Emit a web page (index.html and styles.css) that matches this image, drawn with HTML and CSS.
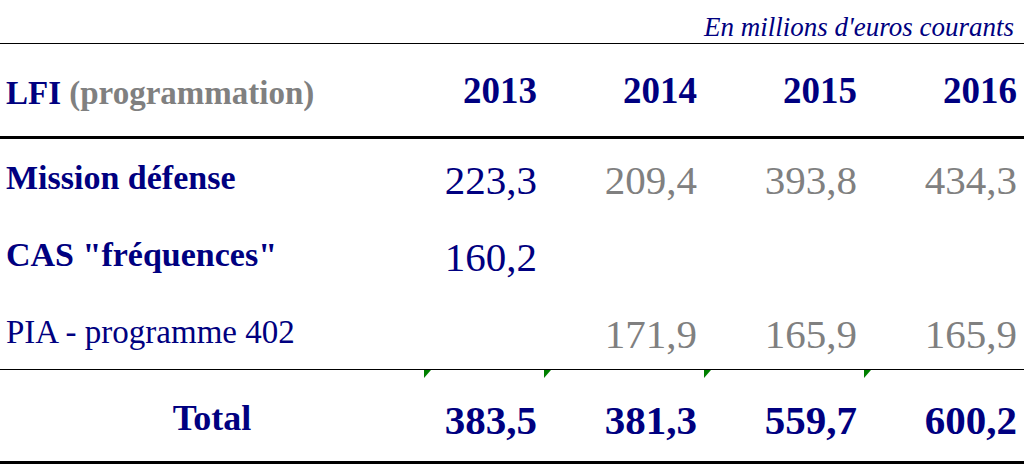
FILE: index.html
```html
<!DOCTYPE html>
<html>
<head>
    <meta charset="utf-8">
    <title>LFI programmation</title>
    <link rel="stylesheet" href="styles.css">
</head>
<body>
<div class="sheet">
    <div class="caption">En millions d'euros courants</div>

    <div class="row head">
        <div class="cell label"><span class="navy">LFI</span>&nbsp;<span class="grey">(programmation)</span></div>
        <div class="cell num">2013</div>
        <div class="cell num">2014</div>
        <div class="cell num">2015</div>
        <div class="cell num">2016</div>
    </div>

    <div class="row line1">
        <div class="cell label strong">Mission défense</div>
        <div class="cell num">223,3</div>
        <div class="cell num grey">209,4</div>
        <div class="cell num grey">393,8</div>
        <div class="cell num grey">434,3</div>
    </div>

    <div class="row line2">
        <div class="cell label strong">CAS "fréquences"</div>
        <div class="cell num">160,2</div>
        <div class="cell num"></div>
        <div class="cell num"></div>
        <div class="cell num"></div>
    </div>

    <div class="row line3">
        <div class="cell label">PIA - programme 402</div>
        <div class="cell num"></div>
        <div class="cell num grey">171,9</div>
        <div class="cell num grey">165,9</div>
        <div class="cell num grey">165,9</div>
    </div>

    <div class="row total">
        <div class="cell label">Total</div>
        <div class="cell num flag">383,5</div>
        <div class="cell num flag">381,3</div>
        <div class="cell num flag">559,7</div>
        <div class="cell num flag">600,2</div>
    </div>
</div>
</body>
</html>
```

FILE: styles.css
```css
body {
    margin: 0;
    background-color: #ffffff;
    font-family: "Liberation Serif", "Times New Roman", serif;
    color: #000080;
}

.sheet {
    width: 1024px;
}

/* ligne d'unité en haut à droite */
.caption {
    height: 44px;
    box-sizing: border-box;
    padding: 0 10px 2px 0;
    border-bottom: 1px solid #000000;
    display: flex;
    justify-content: flex-end;
    align-items: flex-end;
    font-size: 27px;
    font-style: italic;
    line-height: 1;
}

.row {
    display: grid;
    grid-template-columns: 424px 120px 160px 160px 160px;
    box-sizing: border-box;
}

.cell {
    display: flex;
    align-items: flex-end;
    line-height: 1;
    white-space: nowrap;
    position: relative;
}

.label {
    padding-left: 6px;
    font-size: 33px;
}

.num {
    justify-content: flex-end;
    padding-right: 7px;
    font-size: 41px;
}

.navy {
    color: #000080;
}

.grey {
    color: #808080;
}

.strong {
    font-weight: bold;
    font-size: 34px;
}

/* en-tête */
.head {
    height: 95px;
    border-bottom: 3px solid #000000;
    font-weight: bold;
}

.head .label {
    padding-bottom: 26px;
}

.head .num {
    font-size: 37px;
    padding-bottom: 27px;
}

/* lignes de données */
.line1 {
    height: 76px;
}

.line2 {
    height: 77px;
}

.line3 {
    height: 78px;
    border-bottom: 1px solid #000000;
}

.line1 .label {
    padding-bottom: 20px;
}

.line2 .label {
    padding-bottom: 20px;
}

.line3 .label {
    padding-bottom: 20px;
}

.line1 .num,
.line2 .num,
.line3 .num {
    padding-bottom: 14px;
}

/* total */
.total {
    height: 94px;
    border-bottom: 3px solid #000000;
    font-weight: bold;
}

.total .label {
    justify-content: center;
    padding-left: 0;
    padding-bottom: 25px;
    font-size: 36px;
}

.total .num {
    padding-bottom: 20px;
}

/* petit triangle vert dans le coin des cellules */
.flag::before {
    content: "";
    position: absolute;
    top: 0;
    left: 0;
    border-top: 8px solid #008000;
    border-right: 7px solid transparent;
}
```
